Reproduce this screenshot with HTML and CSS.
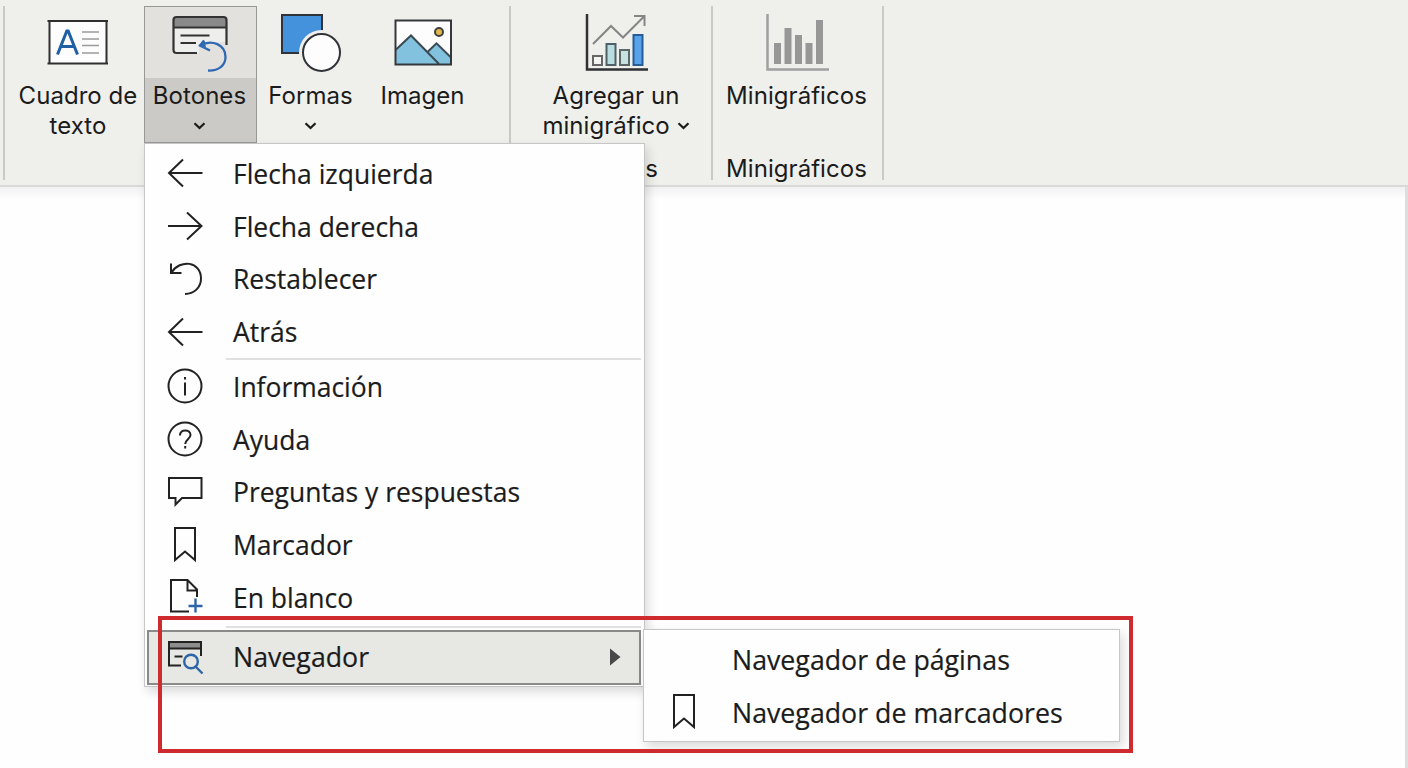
FILE: index.html
```html
<!DOCTYPE html>
<html lang="es">
<head>
<meta charset="utf-8">
<title>Botones</title>
<link rel="stylesheet" href="styles.css">
</head>
<body>
    <div class="ribbon">
        <div class="group group-elements">
            <div class="tool tool-text">
                <svg class="tool-icon" width="64" height="64" viewBox="0 0 64 64">
                    <rect x="5" y="13" width="56" height="42" fill="#fdfdfd"/>
                    <path d="M2.500 13H63M2.500 55.500H63M4.500 13V55M61.500 13V55" fill="none" stroke="#2f2f2f" stroke-width="2"/>
                    <path d="M12.500 46.500 21.800 23h1.400L32.500 46.500M16 38.500H29" fill="none" stroke="#1f5fa3" stroke-width="3"/>
                    <path d="M37 24h17M37 31h17M37 37.500h17M37 45h17" stroke="#9c9c9c" stroke-width="1.500"/>
                </svg>
                <span class="tool-label">Cuadro de<br>texto</span>
            </div>
            <div class="tool tool-buttons active">
                <svg class="tool-icon" width="64" height="64" viewBox="0 0 64 64">
                    <path d="M4.500 12q0-3 3-3h47q3 0 3 3v7h-53z" fill="#8a8a8a"/>
                    <path d="M4.500 19.500h53V34H42L30 38v7H7.500q-3 0-3-3z" fill="#eeeeec"/>
                    <path d="M28 45H7.500q-3 0-3-3V12q0-3 3-3h47q3 0 3 3v25M4.500 19.500h53M11.500 27.500h29M11.500 35h15.500" fill="none" stroke="#333" stroke-width="2.200"/>
                    <path d="M31 37.500C43 31 56.500 36.500 56.500 49c0 8.500-7 14-17.500 13.500M41 42.500 31 37.500 35 32.500" fill="none" stroke="#3069b3" stroke-width="2.300"/>
                    <path d="M29.500 37.500 35.500 32.500 37 39z" fill="#3069b3"/>
                </svg>
                <span class="tool-label">Botones</span>
                <svg class="chevron" width="13" height="8" viewBox="0 0 13 8"><path d="M1.500 1.200 6.500 6l5-4.800"/></svg>
            </div>
            <div class="tool tool-shapes">
                <svg class="tool-icon" width="64" height="64" viewBox="0 0 64 64">
                    <rect x="3" y="7" width="40" height="38" fill="#4592dc" stroke="#303438" stroke-width="2"/>
                    <circle cx="42.500" cy="44.500" r="22.500" fill="#efeeeb"/>
                    <circle cx="42.500" cy="44.500" r="18.500" fill="#fdfdfd" stroke="#303438" stroke-width="2"/>
                </svg>
                <span class="tool-label">Formas</span>
                <svg class="chevron" width="13" height="8" viewBox="0 0 13 8"><path d="M1.500 1.200 6.500 6l5-4.800"/></svg>
            </div>
            <div class="tool tool-image">
                <svg class="tool-icon" width="64" height="64" viewBox="0 0 64 64">
                    <rect x="4.500" y="12.500" width="55" height="44" fill="#fdfdfd"/>
                    <path d="M4.500 42 20 27.500 37 43.500l8.500-8.200L59.500 49v7.500h-55z" fill="#82c2df"/>
                    <path d="M4.500 42 20 27.500 48 56M37 43.500l8.500-8.200L59.500 49" fill="none" stroke="#3b4a52" stroke-width="2"/>
                    <circle cx="48" cy="24" r="4" fill="#e2b948" stroke="#3f4040" stroke-width="2"/>
                    <rect x="4.500" y="12.500" width="55.500" height="44" fill="none" stroke="#34383b" stroke-width="2"/>
                </svg>
                <span class="tool-label">Imagen</span>
            </div>
        </div>
        <div class="group group-add">
            <div class="tool">
                <svg class="tool-icon" width="64" height="64" viewBox="0 0 64 64">
                    <path d="M3 6V61.500H64" fill="none" stroke="#2f3133" stroke-width="2.500"/>
                    <path d="M9 36 27 18l12 11.500L60 8.500M50 8h10.500v10" fill="none" stroke="#858585" stroke-width="2"/>
                    <g stroke-width="2">
                        <rect x="9" y="48" width="9" height="9" fill="#f4f4f2" stroke="#666"/>
                        <rect x="22.500" y="36" width="9" height="21" fill="#b9dde0" stroke="#4e6065"/>
                        <rect x="36" y="42" width="9" height="15" fill="#c8e1e1" stroke="#5b6869"/>
                        <rect x="49.500" y="27" width="9" height="30" fill="#57a2eb" stroke="#275c94"/>
                    </g>
                </svg>
                <span class="tool-label">Agregar un<br>minigráfico <svg class="chevron" width="13" height="8" viewBox="0 0 13 8"><path d="M1.500 1.200 6.500 6l5-4.800"/></svg></span>
            </div>
            <div class="group-name">Minigráficos</div>
        </div>
        <div class="group group-spark">
            <div class="tool">
                <svg class="tool-icon" width="64" height="64" viewBox="0 0 64 64">
                    <path d="M2.500 6V61.500H64" fill="none" stroke="#a0a0a0" stroke-width="2.500"/>
                    <path d="M12.500 35v21M23 20v36M33.500 27v29M44 35v21M54.500 12v44" stroke="#979797" stroke-width="7"/>
                </svg>
                <span class="tool-label">Minigráficos</span>
            </div>
            <div class="group-name">Minigráficos</div>
        </div>
    </div>
    <div class="canvas"></div>

    <div class="menu main-menu">
        <div class="item">
            <svg class="icon" width="40" height="40" viewBox="0 0 40 40"><path d="M37.500 20H4M18 6.500 4 20l14 13.500"/></svg>
            <span class="label">Flecha izquierda</span>
        </div>
        <div class="item">
            <svg class="icon" width="40" height="40" viewBox="0 0 40 40"><path d="M3 20h33.500M22 6.500 36.500 20 22 33.500"/></svg>
            <span class="label">Flecha derecha</span>
        </div>
        <div class="item">
            <svg class="icon" width="40" height="40" viewBox="0 0 40 40"><path d="M6 4.500V14H16.500M6.500 13.500C15 0 36 2 36 19.500c0 9-7 15.500-16 15.500"/></svg>
            <span class="label">Restablecer</span>
        </div>
        <div class="item">
            <svg class="icon" width="40" height="40" viewBox="0 0 40 40"><path d="M37.500 20H4M18 6.500 4 20l14 13.500"/></svg>
            <span class="label">Atrás</span>
        </div>
        <div class="divider"></div>
        <div class="item">
            <svg class="icon" width="40" height="40" viewBox="0 0 40 40"><circle cx="20" cy="20" r="16.500"/><path d="M20 16.500V29.500M20 11v2.400"/></svg>
            <span class="label">Información</span>
        </div>
        <div class="item">
            <svg class="icon" width="40" height="40" viewBox="0 0 40 40"><circle cx="20" cy="20" r="16.500"/><path d="M15 16.500c0-7 10.500-6.500 10.500-.5 0 4-5.300 4.500-5.300 9M20.200 27v2.500"/></svg>
            <span class="label">Ayuda</span>
        </div>
        <div class="item">
            <svg class="icon" width="40" height="40" viewBox="0 0 40 40"><path d="M4 6H36.500V26H17L10.500 32.500V26H4z"/></svg>
            <span class="label">Preguntas y respuestas</span>
        </div>
        <div class="item">
            <svg class="icon" width="40" height="40" viewBox="0 0 40 40"><path d="M10 3H30V35L20 26.500 10 35z"/></svg>
            <span class="label">Marcador</span>
        </div>
        <div class="item">
            <svg class="icon" width="40" height="40" viewBox="0 0 40 40"><path d="M24 34.500H6V3H22.500L32 12.500V20M22.500 3v10.500H32"/><path class="blue" d="M30.500 21.500v14M23.500 29h14"/></svg>
            <span class="label">En blanco</span>
        </div>
        <div class="divider divider-low"></div>
        <div class="item selected">
            <svg class="icon" width="40" height="40" viewBox="0 0 40 40">
                <rect x="4" y="5" width="32" height="6" fill="#8d8d8d" stroke="none"/>
                <path d="M16 28.500H4V5H36V19M4 11.500H36M9.500 19.500h8"/>
                <path class="blue" d="M30.500 29.500 37.500 36.500"/>
                <circle class="blue" cx="26" cy="24.500" r="6.800"/>
            </svg>
            <span class="label">Navegador</span>
            <svg class="arrow" width="11" height="18" viewBox="0 0 11 18"><path d="M0 .5 10.500 9 0 17.500z"/></svg>
        </div>
    </div>

    <div class="menu sub-menu">
        <div class="item">
            <span class="icon"></span>
            <span class="label">Navegador de páginas</span>
        </div>
        <div class="item">
            <svg class="icon" width="40" height="40" viewBox="0 0 40 40"><path d="M10 3H30V35L20 26.500 10 35z"/></svg>
            <span class="label">Navegador de marcadores</span>
        </div>
    </div>

    <div class="highlight"></div>
</body>
</html>
```

FILE: styles.css
```css
* {
    box-sizing: border-box;
}
body {
    margin: 0;
    height: 768px;
    overflow: hidden;
    position: relative;
    display: flex;
    flex-direction: column;
    background: #fefefe;
    color: #1b1b1b;
}
.ribbon {
    display: flex;
    height: 187px;
    padding: 6px 0 0 3px;
    background: #efefec;
    border-bottom: 2px solid #d9d9d9;
    font: 24px/30px Inter, sans-serif;
    letter-spacing: 0.05px;
    flex-shrink: 0;
}
.canvas {
    flex: 1;
    border-right: 3px solid #dedede;
    background: linear-gradient(#f1f1f1, #fefefe 12px);
}
.group {
    position: relative;
    display: flex;
    justify-content: center;
    height: 174px;
    border-left: 2px solid #c9c9c7;
}
.group-elements {
    width: 506px;
    justify-content: flex-start;
    padding-left: 7px;
}
.group-add {
    width: 202px;
    padding-left: 10px;
}
.group-spark {
    width: 173px;
    padding-right: 2px;
    border-right: 2px solid #c9c9c7;
}
.tool {
    display: flex;
    flex-direction: column;
    align-items: center;
    text-align: center;
    padding-top: 2px;
}
.tool-icon {
    display: block;
    margin-bottom: 9px;
    flex-shrink: 0;
}
.tool-label {
    white-space: nowrap;
}
.tool-text {
    width: 132px;
}
.tool-text .tool-icon {
    margin-left: -2px;
}
.tool-buttons {
    width: 113px;
    height: 137px;
}
.tool-shapes {
    width: 110px;
    padding-right: 3px;
}
.tool-image {
    width: 112px;
    padding-right: 1px;
}
.tool.active {
    padding: 1px 2px 0 0;
    border: 1px solid #989896;
    background: linear-gradient(#e2e1de 71px, #cbcac6 71px);
}
.active .tool-icon {
    margin-left: 2px;
}
.chevron {
    fill: none;
    stroke: #1b1b1b;
    stroke-width: 2.2;
}
.tool > .chevron {
    margin-top: 11px;
}
.active > .chevron {
    margin-right: 1px;
}
.tool-label .chevron {
    vertical-align: 4px;
}
.group-name {
    position: absolute;
    right: 2px;
    left: 0;
    bottom: -4px;
    text-align: center;
}
.group-add .group-name {
    right: 53px;
    left: auto;
}
/* the open menu covers all but the end of this name */
.group-add .group-name {
    clip-path: inset(0 0 0 127px);
}
.menu {
    position: absolute;
    background: #fefefe;
    border: 1px solid #c6c6c6;
    box-shadow: 3px 5px 10px rgba(0, 0, 0, 0.14);
    font: 28px/52px "Open Sans", "Noto Sans", sans-serif;
}
.main-menu {
    left: 144px;
    top: 143px;
    width: 501px;
    height: 544px;
    padding: 3px 3px 3px 2px;
}
.sub-menu {
    left: 643px;
    top: 629px;
    width: 477px;
    height: 113px;
    padding: 4px 2px;
}
.item {
    display: flex;
    align-items: center;
    height: 52.75px;
    padding-left: 18px;
}
.icon {
    width: 40px;
    height: 40px;
    margin-right: 28px;
    flex-shrink: 0;
    fill: none;
    stroke: #222;
    stroke-width: 2;
}
.icon .blue {
    stroke: #2c66a8;
    stroke-width: 2.4;
}
.label {
    white-space: nowrap;
    margin-top: -1px;
    -webkit-text-stroke: 0.2px #1b1b1b;
    transform: scaleX(0.945);
    transform-origin: 0 50%;
}
.divider {
    height: 2px;
    margin: 0 0 0 79px;
    background: #e0e0e0;
}
.divider-low {
    margin: 2px 0 2px 79px;
}
.selected {
    height: 55px;
    padding-left: 16px;
    border: 2px solid #8a8a88;
    background: #e7e7e3;
}
.selected .label,
.sub-menu .label {
    margin-top: -2px;
    transform: scaleX(0.955);
}
.arrow {
    margin: 0 18px 0 auto;
    fill: #484848;
}
.sub-menu .icon {
    margin-top: -2px;
}
.highlight {
    position: absolute;
    left: 158px;
    top: 616px;
    width: 975px;
    height: 137px;
    border: 4px solid #cf2a2d;
}
```
